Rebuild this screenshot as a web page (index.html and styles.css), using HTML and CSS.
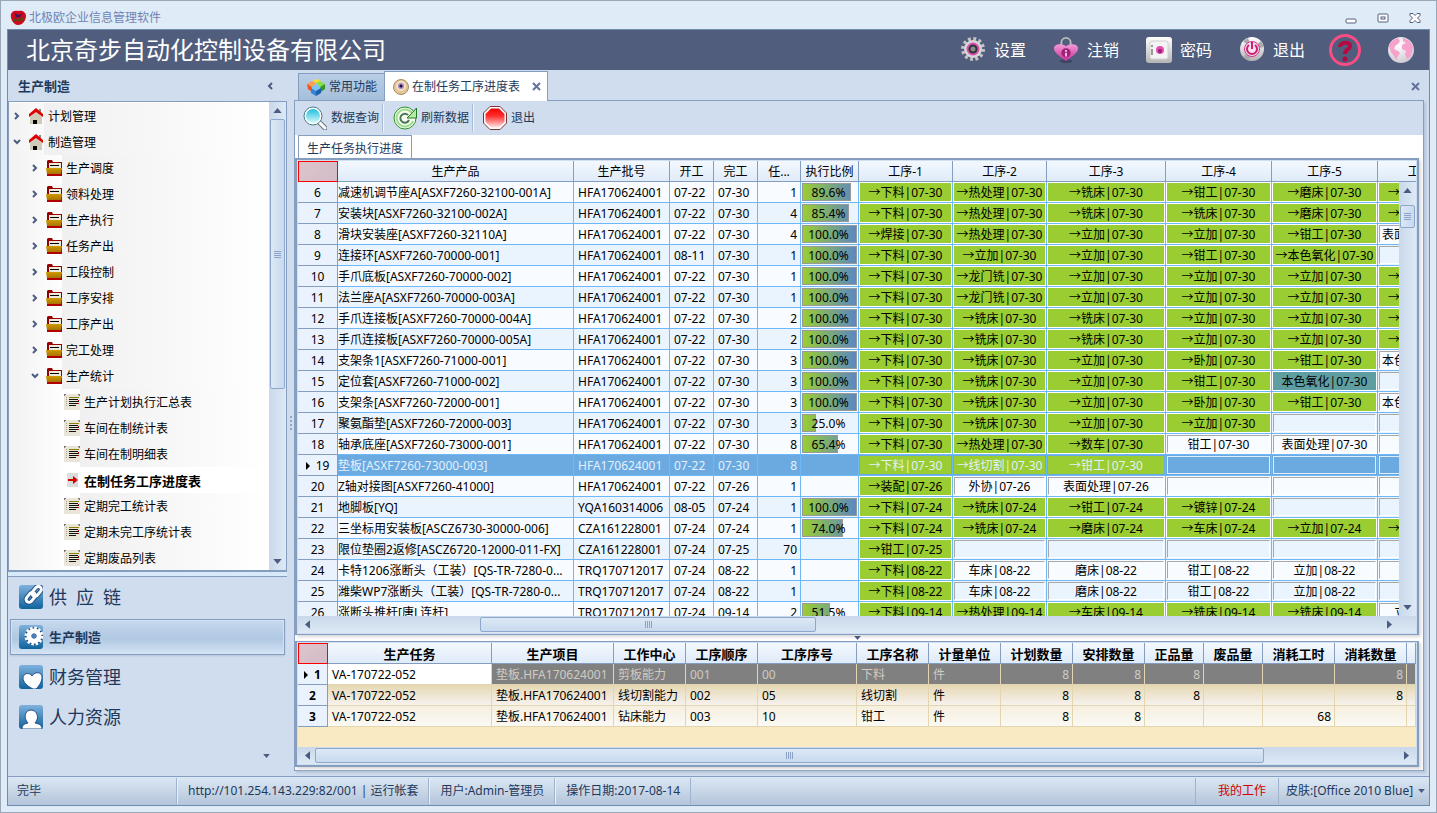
FILE: index.html
```
<!DOCTYPE html>
<html lang="zh-CN">
<head>
    <meta charset="UTF-8">
    <meta name="viewport" content="width=device-width, initial-scale=1.0">
    <title>北极欧企业信息管理软件</title>
    <link rel="stylesheet" href="styles.css">
</head>
<body>
    <!-- Иконки -->
    <svg class="sprite" aria-hidden="true">
        <defs>
            <linearGradient id="g-blue" x1="0" y1="0" x2="0" y2="1"><stop offset="0" stop-color="#7fb2dd"/><stop offset="1" stop-color="#10639d"/></linearGradient>
            <linearGradient id="g-pink" x1="0" y1="0" x2="0" y2="1"><stop offset="0" stop-color="#f29ad6"/><stop offset="1" stop-color="#c8309a"/></linearGradient>
            <linearGradient id="g-metal" x1="0" y1="0" x2="0" y2="1"><stop offset="0" stop-color="#ffffff"/><stop offset="1" stop-color="#b4b4b4"/></linearGradient>
            <linearGradient id="g-glass" x1="0" y1="0" x2="0" y2="1"><stop offset="0" stop-color="#1fc0dc"/><stop offset="1" stop-color="#d8f8fc"/></linearGradient>
            <linearGradient id="g-stop" x1="0" y1="0" x2="0" y2="1"><stop offset="0" stop-color="#f60000"/><stop offset="0.4" stop-color="#ff3030"/><stop offset="1" stop-color="#ffe4e4"/></linearGradient>
            <linearGradient id="g-folder" x1="0" y1="0" x2="0" y2="1"><stop offset="0" stop-color="#d09a00"/><stop offset="1" stop-color="#a87400"/></linearGradient>
            <radialGradient id="g-globe" cx="0.4" cy="0.3" r="0.8"><stop offset="0" stop-color="#ffffff"/><stop offset="1" stop-color="#c9c4cf"/></radialGradient>
        </defs>
        <symbol id="i-house" viewBox="0 0 16 16">
            <path d="M8 3l6 5v8H2V8z" fill="#cfcbb8"/>
            <path d="M11 1h2v5h-2z" fill="#8c8c84"/>
            <path d="M8 0l7 6v3L8 4 1 9V6z" fill="#e00000"/>
            <rect x="5" y="12" width="4" height="4" fill="#000"/>
        </symbol>
        <symbol id="i-folder" viewBox="0 0 16 16">
            <path d="M1 1l1-1h4l1 2h9v14H1z" fill="#9a0000"/>
            <path d="M3 3h12v5H3z" fill="#eeeadb"/>
            <path d="M4 5.500h9" stroke="#000"/>
            <path d="M0 8h16l-1 6H1z" fill="url(#g-folder)"/>
            <path d="M1 14h15v2H1z" fill="#b00000"/>
        </symbol>
        <symbol id="i-list" viewBox="0 0 16 16">
            <rect width="16" height="16" fill="#e9e6d9"/>
            <path d="M0 0h2v1H1v1H0zM14 0h2v2h-1z" fill="#77756b"/>
            <path d="M5 3.500h10" stroke="#8a8000"/>
            <path d="M5 5.500h9M5 7.500h10M5 9.500h9M5 11.500h7" stroke="#111"/>
            <path d="M2.500 3v10" stroke="#aaa696" stroke-dasharray="1 1"/>
            <path d="M14 6h1v1h-1zM14 9h1v1h-1z" fill="#c00"/>
        </symbol>
        <symbol id="i-go" viewBox="0 0 16 16">
            <rect x="3" y="1" width="11" height="14" rx="1" fill="#dcdcdc"/>
            <path d="M4 7h5V4l5 4-5 4V9H4z" fill="#d40000"/>
        </symbol>
        <symbol id="i-right" viewBox="0 0 10 10"><path d="M3 2l3 3-3 3" fill="none" stroke="#4c5c80" stroke-width="2"/></symbol>
        <symbol id="i-down" viewBox="0 0 10 10"><path d="M2 3l3 3 3-3" fill="none" stroke="#4c5c80" stroke-width="2"/></symbol>
        <symbol id="i-left" viewBox="0 0 10 10"><path d="M6 2L3 5l3 3" fill="none" stroke="#4c5c80" stroke-width="2"/></symbol>
        <symbol id="i-x" viewBox="0 0 10 10"><path d="M1 1l7 7M8 1L1 8" fill="none" stroke="#63739a" stroke-width="2"/></symbol>
        <symbol id="i-tri" viewBox="0 0 10 6"><path d="M0 0h10L5 6z" fill="#4a5a80"/></symbol>
        <symbol id="i-berry" viewBox="0 0 16 16">
            <path d="M1 4c1-3 4-4 7-3 4-1 8 1 8 5s-3 9-8 9-8-7-7-11z" fill="#cf0a1c"/>
            <path d="M4 3l5 2 5-2-4 3 1 2-3-1-3 1 1-2z" fill="#3b1560"/>
            <circle cx="5" cy="10" r="1.500" fill="#3a5a10"/><circle cx="9" cy="10" r="1.500" fill="#3a5a10"/><circle cx="12" cy="9" r="1.500" fill="#3a5a10"/>
        </symbol>
        <symbol id="i-gear" viewBox="0 0 26 26">
            <circle cx="13" cy="12" r="10" fill="none" stroke="#c4c4c4" stroke-width="4" stroke-dasharray="2.800 2.436"/>
            <circle cx="13" cy="12" r="9" fill="#d6d6d6"/>
            <circle cx="13" cy="12" r="5.500" fill="#777" stroke="#e04cb8" stroke-width="2"/>
            <circle cx="13" cy="12" r="3.500" fill="#8a8a8a" stroke="#333" stroke-width="2"/>
        </symbol>
        <symbol id="i-lock" viewBox="0 0 26 28">
            <path d="M8 11V6a5 5 0 0 1 10 0v5" fill="none" stroke="#b9bcbc" stroke-width="2"/>
            <ellipse cx="13" cy="26" rx="7" ry="2" fill="#3d4763"/>
            <path d="M13 26C9 22 0 18 0 12c0-4 8-6 13-2 5-4 13-2 13 2 0 6-9 10-13 14z" fill="url(#g-pink)"/>
            <circle cx="13" cy="17" r="5" fill="#a0207a"/>
            <path d="M12 14h2v2h-2zM12 17h2v4h-2z" fill="#f5c4e6"/>
        </symbol>
        <symbol id="i-safe" viewBox="0 0 26 26">
            <rect width="26" height="26" rx="3" fill="url(#g-metal)"/>
            <rect x="4" y="4" width="18" height="18" rx="2" fill="#f4f4f4" stroke="#d0d0d0"/>
            <path d="M6 8v2M6 12v6" stroke="#999" stroke-width="2"/>
            <circle cx="14" cy="13" r="4" fill="#e04cb0"/><circle cx="14" cy="14" r="2" fill="#9a1c78"/>
        </symbol>
        <symbol id="i-power" viewBox="0 0 26 26">
            <circle cx="13" cy="12" r="12" fill="url(#g-metal)"/>
            <path d="M13 12L4 4l5-3zM13 12l9-8 3 6zM13 12l-9 8 6 4z" fill="#a9a9ad"/>
            <circle cx="13" cy="12" r="7.500" fill="#f3e3ed" stroke="#d4338c"/>
            <path d="M10 8a5 5 0 1 0 6 0M13 5v7" fill="none" stroke="#cf1f74" stroke-width="2"/>
        </symbol>
        <symbol id="i-help" viewBox="0 0 32 32">
            <circle cx="16" cy="16" r="14.500" fill="none" stroke="#fb4d85" stroke-width="3"/>
            <path d="M11 13c0-5 10-6 10-1 0 4-5 3-5 8" fill="none" stroke="#b50a41" stroke-width="4"/>
            <circle cx="16" cy="25" r="2.500" fill="#b50a41"/>
        </symbol>
        <symbol id="i-globe" viewBox="0 0 26 26">
            <circle cx="13" cy="13" r="13" fill="url(#g-globe)"/>
            <path d="M1 9c1-4 5-7 9-8l2 3-2 3-3 2-1 3 4 2 2 2-2 3-2 4-2-4-3-4zM15 1c5 1 8 4 10 9l-1 5-2 5-3 2-2-5 1-3-4-2 0-4 4-2-3-2z" fill="#f6a2cc"/>
        </symbol>
        <symbol id="i-cubes" viewBox="0 0 20 17">
            <path d="M7 2l4-2 4 2-4 2z" fill="#ffe01a"/>
            <path d="M1 5l5-3 4 2-4 4z" fill="#ff9c4d"/><path d="M1 5l5 3v5l-4-3z" fill="#e8561a"/>
            <path d="M10 4l4-2 5 3-5 3z" fill="#8be04a"/><path d="M14 8l5-3v5l-4 3z" fill="#2f9a1e"/>
            <path d="M5 9l5-4 5 4-5 3z" fill="#7cc4f6"/><path d="M5 9l5 3v5l-5-3z" fill="#2f86d8"/><path d="M10 12l5-3v5l-5 3z" fill="#1b5fae"/>
        </symbol>
        <symbol id="i-eye" viewBox="0 0 16 16">
            <circle cx="8" cy="8" r="7.500" fill="#e3c69a" stroke="#a98a5c"/>
            <circle cx="8" cy="7" r="5" fill="#f1dfc4"/><circle cx="8" cy="7" r="3" fill="#a488c0"/><circle cx="8" cy="7" r="1.500" fill="#2a0a3c"/>
        </symbol>
        <symbol id="i-find" viewBox="0 0 24 24">
            <path d="M16 16l6 6" stroke="#6d7478" stroke-width="5" stroke-linecap="round"/>
            <path d="M16 16l6 6" stroke="#fff" stroke-width="3" stroke-linecap="round"/>
            <circle cx="10" cy="10" r="9" fill="#fff" stroke="#4a7c88"/>
            <circle cx="10" cy="10" r="7" fill="url(#g-glass)"/>
        </symbol>
        <symbol id="i-reload" viewBox="0 0 24 24">
            <circle cx="12" cy="12" r="11" fill="#f4fff0" stroke="#2f8f2f"/>
            <path d="M19 7a8.500 8.500 0 1 0 1 8" fill="none" stroke="#9fdc8f" stroke-width="2"/>
            <path d="M15 9a4.500 4.500 0 1 0 1 5" fill="none" stroke="#4d7455" stroke-width="2"/>
            <path d="M23.500 2v10H14l4-4z" fill="#b5eba5" stroke="#207a20"/>
        </symbol>
        <symbol id="i-stop" viewBox="0 0 24 24">
            <path d="M7 .5h10l6.500 6.500v10L17 23.500H7L.5 17V7z" fill="#fff" stroke="#7a3434"/>
            <path d="M8 2.500h8l5.500 5.500v8L16 21.500H8L2.500 16V8z" fill="url(#g-stop)"/>
        </symbol>
        <symbol id="i-chain" viewBox="0 0 24 24">
            <rect width="24" height="24" rx="3" fill="url(#g-blue)"/>
            <g fill="none" stroke="#24508a" stroke-width="5"><rect x="6" y="9" width="11" height="6" rx="3" transform="rotate(-50 12 12)"/><rect x="12" y="3" width="11" height="6" rx="3" transform="rotate(-50 18 6)"/></g>
            <g fill="none" stroke="#fff" stroke-width="3"><rect x="6" y="9" width="11" height="6" rx="3" transform="rotate(-50 12 12)"/><rect x="12" y="3" width="11" height="6" rx="3" transform="rotate(-50 18 6)"/></g>
        </symbol>
        <symbol id="i-cog" viewBox="0 0 24 24">
            <rect width="24" height="24" rx="3" fill="url(#g-blue)"/>
            <circle cx="15" cy="11" r="9" fill="#24508a"/>
            <circle cx="15" cy="11" r="8" fill="none" stroke="#fff" stroke-width="3" stroke-dasharray="2.500 1.688"/>
            <circle cx="15" cy="11" r="5" fill="none" stroke="#fff" stroke-width="5"/>
            <circle cx="15" cy="11" r="2.500" fill="#4a80b8"/>
        </symbol>
        <symbol id="i-heart" viewBox="0 0 24 24">
            <rect width="24" height="24" rx="3" fill="url(#g-blue)"/>
            <path d="M14 24C8 21 4 17 4 13c0-5 7-6 9-2 3-5 10-4 10 1 0 4-2 8-6 12z" fill="#fff" stroke="#24508a"/>
        </symbol>
        <symbol id="i-user" viewBox="0 0 24 24">
            <rect width="24" height="24" rx="3" fill="url(#g-blue)"/>
            <path d="M3 24c0-5 3-5 6-6-5-5-3-13 3-13s9 8 4 13c3 1 7 1 7 6z" fill="#fff" stroke="#24508a"/>
        </symbol>
    </svg>

    <div class="window">
        <!-- Заголовок окна -->
        <div class="titlebar">
            <svg class="ico-16"><use href="#i-berry"/></svg>
            <span class="titlebar-text">北极欧企业信息管理软件</span>
            <div class="win-btns">
                <button type="button" aria-label="最小化"><svg width="12" height="12"><rect x="1" y="7" width="10" height="4" rx="1" fill="#fff" stroke="#55607a"/></svg></button>
                <button type="button" aria-label="最大化"><svg width="12" height="12"><rect x="1" y="2" width="10" height="8" rx="1" fill="#fff" stroke="#55607a"/><rect x="4" y="5" width="4" height="2" fill="#fff" stroke="#55607a"/></svg></button>
                <button type="button" aria-label="关闭"><svg width="12" height="12"><path d="M1 1.500h3l2 2 2-2h3v2L8.500 6 11 8.500v2H8l-2-2-2 2H1v-2L3.500 6 1 3.500z" fill="#fff" stroke="#55607a"/></svg></button>
            </div>
        </div>

        <div class="frame">
            <!-- Шапка -->
            <header class="header">
                <h1>北京奇步自动化控制设备有限公司</h1>
                <nav class="header-nav">
                    <a href="#"><svg class="ico-26"><use href="#i-gear"/></svg>设置</a>
                    <a href="#"><svg class="ico-26"><use href="#i-lock"/></svg>注销</a>
                    <a href="#"><svg class="ico-26"><use href="#i-safe"/></svg>密码</a>
                    <a href="#"><svg class="ico-26"><use href="#i-power"/></svg>退出</a>
                    <a href="#" class="help" aria-label="帮助"><svg class="ico-32"><use href="#i-help"/></svg></a>
                    <a href="#" aria-label="网站"><svg class="ico-26"><use href="#i-globe"/></svg></a>
                </nav>
            </header>

            <div class="work">
                <!-- Левая панель -->
                <aside class="side">
                    <div class="side-head">生产制造<button type="button" aria-label="收起"><svg class="ico-10"><use href="#i-left"/></svg></button></div>
                    <div class="tree-box">
                        <ul class="tree" id="tree"></ul>
                        <div class="vscroll">
                            <svg class="tri tri-up"><use href="#i-tri"/></svg>
                            <div class="thumb tree-thumb"><i class="grip"></i></div>
                            <svg class="tri"><use href="#i-tri"/></svg>
                        </div>
                    </div>
                    <div class="side-split"></div>
                    <nav class="modules">
                        <a href="#"><svg class="ico-24"><use href="#i-chain"/></svg>供&ensp;应&ensp;链</a>
                        <a href="#" class="active"><svg class="ico-24"><use href="#i-cog"/></svg>生产制造</a>
                        <a href="#"><svg class="ico-24"><use href="#i-heart"/></svg>财务管理</a>
                        <a href="#"><svg class="ico-24"><use href="#i-user"/></svg>人力资源</a>
                    </nav>
                    <div class="side-foot"><svg class="tri-small"><use href="#i-tri"/></svg></div>
                </aside>
                <div class="col-split"><i></i><i></i><i></i><i></i></div>

                <!-- Рабочая область -->
                <main class="main">
                    <div class="tabs">
                        <button type="button" class="tab"><svg class="ico-tab"><use href="#i-cubes"/></svg>常用功能</button>
                        <button type="button" class="tab current"><svg class="ico-16"><use href="#i-eye"/></svg>在制任务工序进度表<svg class="ico-10 tab-x"><use href="#i-x"/></svg></button>
                        <button type="button" class="close-all" aria-label="关闭"><svg class="ico-10"><use href="#i-x"/></svg></button>
                    </div>
                    <div class="page">
                        <div class="toolbar">
                            <button type="button"><svg class="ico-24"><use href="#i-find"/></svg>数据查询</button>
                            <button type="button"><svg class="ico-24"><use href="#i-reload"/></svg>刷新数据</button>
                            <button type="button"><svg class="ico-24"><use href="#i-stop"/></svg>退出</button>
                        </div>
                        <div class="subtabs"><button type="button">生产任务执行进度</button></div>

                        <!-- Верхняя таблица -->
                        <section class="grid grid-top">
                            <div class="grid-view">
                                <table class="tasks">
                                    <colgroup>
                                        <col class="w40"><col class="w236"><col class="w96"><col class="w44"><col class="w44"><col class="w43"><col class="w58"><col class="w94"><col class="w94"><col class="w119"><col class="w106"><col class="w106"><col>
                                    </colgroup>
                                    <thead>
                                        <tr><th class="corner"></th><th>生产产品</th><th>生产批号</th><th>开工</th><th>完工</th><th>任...</th><th>执行比例</th><th>工序-1</th><th>工序-2</th><th>工序-3</th><th>工序-4</th><th>工序-5</th><th>工序-6</th></tr>
                                    </thead>
                                    <tbody id="tasks"></tbody>
                                </table>
                                <div class="vscroll over">
                                    <svg class="tri tri-up"><use href="#i-tri"/></svg>
                                    <div class="thumb task-thumb"><i class="grip"></i></div>
                                    <svg class="tri"><use href="#i-tri"/></svg>
                                </div>
                            </div>
                            <div class="hscroll short">
                                <svg class="tri tri-left"><use href="#i-tri"/></svg>
                                <div class="track"><div class="thumb h-thumb-1"><i class="grip side-grip"></i></div></div>
                                <svg class="tri tri-right"><use href="#i-tri"/></svg>
                            </div>
                        </section>
                        <div class="row-split"><svg class="tri-small"><use href="#i-tri"/></svg></div>

                        <!-- Нижняя таблица -->
                        <section class="grid grid-bottom">
                            <div class="grid-view">
                                <table class="details">
                                    <colgroup>
                                        <col class="w30"><col class="w164"><col class="w122"><col class="w72"><col class="w72"><col class="w99"><col class="w72"><col class="w72"><col class="w72"><col class="w72"><col class="w59"><col class="w59"><col class="w72"><col class="w72"><col>
                                    </colgroup>
                                    <thead>
                                        <tr><th class="corner"></th><th>生产任务</th><th>生产项目</th><th>工作中心</th><th>工序顺序</th><th>工序序号</th><th>工序名称</th><th>计量单位</th><th>计划数量</th><th>安排数量</th><th>正品量</th><th>废品量</th><th>消耗工时</th><th>消耗数量</th><th></th></tr>
                                    </thead>
                                    <tbody>
                                        <tr class="sel"><th><i class="mark"></i>1</th><td class="focus">VA-170722-052</td><td>垫板.HFA170624001</td><td>剪板能力</td><td>001</td><td>00</td><td>下料</td><td>件</td><td class="num">8</td><td class="num">8</td><td class="num">8</td><td></td><td></td><td class="num">8</td><td></td></tr>
                                        <tr class="odd"><th>2</th><td>VA-170722-052</td><td>垫板.HFA170624001</td><td>线切割能力</td><td>002</td><td>05</td><td>线切割</td><td>件</td><td class="num">8</td><td class="num">8</td><td class="num">8</td><td></td><td></td><td class="num">8</td><td></td></tr>
                                        <tr class="even"><th>3</th><td>VA-170722-052</td><td>垫板.HFA170624001</td><td>钻床能力</td><td>003</td><td>10</td><td>钳工</td><td>件</td><td class="num">8</td><td class="num">8</td><td></td><td></td><td class="num">68</td><td></td><td></td></tr>
                                    </tbody>
                                </table>
                            </div>
                            <div class="hscroll">
                                <svg class="tri tri-left"><use href="#i-tri"/></svg>
                                <div class="track"><div class="thumb h-thumb-2"><i class="grip side-grip"></i></div></div>
                                <svg class="tri tri-right"><use href="#i-tri"/></svg>
                            </div>
                        </section>
                    </div>
                </main>
            </div>

            <!-- Строка состояния -->
            <footer class="status">
                <span class="st-ready">完毕</span>
                <span class="st-cell">http://101.254.143.229:82/001 | 运行帐套</span>
                <span class="st-cell">用户:Admin-管理员</span>
                <span class="st-cell st-date">操作日期:2017-08-14</span>
                <a href="#" class="st-work">我的工作</a>
                <span class="st-skin"><select aria-label="皮肤"><option>皮肤:[Office 2010 Blue]</option></select><svg class="tri-small"><use href="#i-tri"/></svg></span>
            </footer>
        </div>
    </div>

    <script>
        // Дерево меню: [уровень, иконка, текст, стрелка]
        const menu = [
            [0, 'house', '计划管理', 'right'],
            [0, 'house', '制造管理', 'down'],
            [1, 'folder', '生产调度', 'right'],
            [1, 'folder', '领料处理', 'right'],
            [1, 'folder', '生产执行', 'right'],
            [1, 'folder', '任务产出', 'right'],
            [1, 'folder', '工段控制', 'right'],
            [1, 'folder', '工序安排', 'right'],
            [1, 'folder', '工序产出', 'right'],
            [1, 'folder', '完工处理', 'right'],
            [1, 'folder', '生产统计', 'down'],
            [2, 'list', '生产计划执行汇总表', ''],
            [2, 'list', '车间在制统计表', ''],
            [2, 'list', '车间在制明细表', ''],
            [2, 'go', '在制任务工序进度表', ''],
            [2, 'list', '定期完工统计表', ''],
            [2, 'list', '定期未完工序统计表', ''],
            [2, 'list', '定期废品列表', '']
        ];

        document.getElementById('tree').innerHTML = menu.map(([level, icon, text, arrow]) =>
            `<li class="level-${level}${icon === 'go' ? ' chosen' : ''}">` +
            `<svg class="ico-10">${arrow ? `<use href="#i-${arrow}"/>` : ''}</svg>` +
            `<svg class="ico-16"><use href="#i-${icon}"/></svg><a href="#">${text}</a></li>`
        ).join('');

        // Задания: номер, изделие, партия, начало, конец, кол-во, процент, операции
        const A = 'HFA170624001';
        const tasks = [
            [6, '减速机调节座A[ASXF7260-32100-001A]', A, '07-22', '07-30', 1, 89.6, '→下料|07-30', '→热处理|07-30', '→铣床|07-30', '→钳工|07-30', '→磨床|07-30', '→立加|07-30'],
            [7, '安装块[ASXF7260-32100-002A]', A, '07-22', '07-30', 4, 85.4, '→下料|07-30', '→热处理|07-30', '→铣床|07-30', '→铣床|07-30', '→磨床|07-30', '→立加|07-30'],
            [8, '滑块安装座[ASXF7260-32110A]', A, '07-22', '07-30', 4, 100, '→焊接|07-30', '→热处理|07-30', '→立加|07-30', '→立加|07-30', '→钳工|07-30', '表面处理|07-30'],
            [9, '连接环[ASXF7260-70000-001]', A, '08-11', '07-30', 1, 100, '→下料|07-30', '→立加|07-30', '→立加|07-30', '→钳工|07-30', '→本色氧化|07-30', ''],
            [10, '手爪底板[ASXF7260-70000-002]', A, '07-22', '07-30', 1, 100, '→下料|07-30', '→龙门铣|07-30', '→立加|07-30', '→立加|07-30', '→立加|07-30', '→钳工|07-30'],
            [11, '法兰座A[ASXF7260-70000-003A]', A, '07-22', '07-30', 1, 100, '→下料|07-30', '→龙门铣|07-30', '→立加|07-30', '→立加|07-30', '→立加|07-30', '→钳工|07-30'],
            [12, '手爪连接板[ASXF7260-70000-004A]', A, '07-22', '07-30', 2, 100, '→下料|07-30', '→铣床|07-30', '→铣床|07-30', '→立加|07-30', '→立加|07-30', '→钳工|07-30'],
            [13, '手爪连接板[ASXF7260-70000-005A]', A, '07-22', '07-30', 2, 100, '→下料|07-30', '→铣床|07-30', '→铣床|07-30', '→立加|07-30', '→立加|07-30', '→钳工|07-30'],
            [14, '支架条1[ASXF7260-71000-001]', A, '07-22', '07-30', 3, 100, '→下料|07-30', '→铣床|07-30', '→立加|07-30', '→卧加|07-30', '→钳工|07-30', '本色氧化|07-30'],
            [15, '定位套[ASXF7260-71000-002]', A, '07-22', '07-30', 3, 100, '→下料|07-30', '→铣床|07-30', '→立加|07-30', '→钳工|07-30', '*本色氧化|07-30', ''],
            [16, '支架条[ASXF7260-72000-001]', A, '07-22', '07-30', 3, 100, '→下料|07-30', '→铣床|07-30', '→立加|07-30', '→卧加|07-30', '→钳工|07-30', '本色氧化|07-30'],
            [17, '聚氨酯垫[ASXF7260-72000-003]', A, '07-22', '07-30', 3, 25, '→下料|07-30', '→铣床|07-30', '→立加|07-30', '→立加|07-30', '', ''],
            [18, '轴承底座[ASXF7260-73000-001]', A, '07-22', '07-30', 8, 65.4, '→下料|07-30', '→热处理|07-30', '→数车|07-30', '钳工|07-30', '表面处理|07-30', ''],
            [19, '垫板[ASXF7260-73000-003]', A, '07-22', '07-30', 8, 0, '→下料|07-30', '→线切割|07-30', '→钳工|07-30', '', '', ''],
            [20, 'Z轴对接图[ASXF7260-41000]', A, '07-22', '07-26', 1, 0, '→装配|07-26', '外协|07-26', '表面处理|07-26', '', '', ''],
            [21, '地脚板[YQ]', 'YQA160314006', '08-05', '07-24', 1, 100, '→下料|07-24', '→铣床|07-24', '→钳工|07-24', '→镀锌|07-24', '', ''],
            [22, '三坐标用安装板[ASCZ6730-30000-006]', 'CZA161228001', '07-24', '07-24', 1, 74, '→下料|07-24', '→铣床|07-24', '→磨床|07-24', '→车床|07-24', '→立加|07-24', '→钳工|07-24'],
            [23, '限位垫圈2返修[ASCZ6720-12000-011-FX]', 'CZA161228001', '07-24', '07-25', 70, 0, '→钳工|07-25', '', '', '', '', ''],
            [24, '卡特1206涨断头（工装）[QS-TR-7280-0...', 'TRQ170712017', '07-24', '08-22', 1, 0, '→下料|08-22', '车床|08-22', '磨床|08-22', '钳工|08-22', '立加|08-22', ''],
            [25, '潍柴WP7涨断头（工装）[QS-TR-7280-0...', 'TRQ170712017', '07-24', '08-22', 1, 0, '→下料|08-22', '车床|08-22', '磨床|08-22', '钳工|08-22', '立加|08-22', ''],
            [26, '涨断头推杆[唐L连杆]', 'TRQ170712017', '07-24', '09-14', 2, 51.5, '→下料|09-14', '→热处理|09-14', '→车床|09-14', '→铣床|09-14', '→铣床|09-14', '立加|09-14']
        ];
        const current = 19;

        // Ячейка процента выполнения
        function percentCell(p) {
            if (!p) return '<td></td>';
            return `<td class="pct"><div class="bar" style="width:${p}%"></div><span>${p.toFixed(1)}%</span></td>`;
        }

        // Ячейка операции
        function stepCell(s) {
            const state = s[0] === '→' ? ' done' : s[0] === '*' ? ' active' : '';
            return `<td class="step"><div class="chip${state}">${s.replace('*', '')}</div></td>`;
        }

        document.getElementById('tasks').innerHTML = tasks.map(([no, name, lot, from, to, qty, p, ...steps]) =>
            `<tr${no === current ? ' class="sel"' : ''}><th>${no === current ? '<i class="mark"></i>' : ''}${no}</th>` +
            `<td class="name">${name}</td><td>${lot}</td><td>${from}</td><td>${to}</td><td class="num">${qty}</td>` +
            percentCell(p) + steps.map(stepCell).join('') + '</tr>'
        ).join('');
    </script>
</body>
</html>
```
FILE: styles.css
```
/* Основные стили */
* {
    box-sizing: border-box;
}

body {
    margin: 0;
    font-family: "Noto Sans", "Noto Sans CJK SC", sans-serif;
    font-size: 12px;
    line-height: 20px;
    color: #000;
}

button, select {
    font: inherit;
    color: inherit;
    background: none;
    border: none;
    padding: 0;
    margin: 0;
}

a {
    color: inherit;
    text-decoration: none;
}

svg {
    display: block;
    flex: none;
}

.sprite {
    position: absolute;
    width: 0;
    height: 0;
}

.ico-10 { width: 10px; height: 10px; }
.ico-16 { width: 16px; height: 16px; }
.ico-tab { width: 20px; height: 17px; }
.ico-24 { width: 24px; height: 24px; }
.ico-26 { width: 26px; height: 26px; }
.ico-32 { width: 32px; height: 32px; }
.tri { width: 9px; height: 5px; margin: 6px 0; }
.tri-up { transform: rotate(180deg); }
.tri-left { transform: rotate(90deg); }
.tri-right { transform: rotate(-90deg); }
.tri-small { width: 7px; height: 4px; }

/* Окно */
.window {
    display: flex;
    flex-direction: column;
    height: 100vh;
    min-height: 600px;
    padding: 0 6px 6px;
    border: 1px solid #99a8b8;
    background: #dfebf7;
}

.titlebar {
    display: flex;
    align-items: center;
    height: 28px;
    padding: 5px 9px 0 3px;
    gap: 3px;
    color: #7085b3;
}

.titlebar-text {
    flex: 1;
}

.win-btns {
    display: flex;
    gap: 20px;
}

.frame {
    flex: 1;
    min-height: 0;
    display: flex;
    flex-direction: column;
    border: 1px solid #6f8bb0;
    background: #d0ddee;
}

/* Шапка */
.header {
    display: flex;
    align-items: center;
    justify-content: space-between;
    height: 40px;
    flex: none;
    padding: 0 15px 0 18px;
    background: #515d7d;
    color: #fff;
}

.header h1 {
    margin: 0;
    font-size: 24px;
    font-weight: normal;
    line-height: 40px;
}

.header-nav {
    display: flex;
    align-items: center;
    gap: 27px;
    font-size: 16px;
}

.header-nav a {
    display: flex;
    align-items: center;
    gap: 8px;
}

.header-nav .help {
    margin-left: -3px;
}

.work {
    flex: 1;
    min-height: 0;
    display: flex;
}

/* Левая панель */
.side {
    display: flex;
    flex-direction: column;
    width: 279px;
    color: #1e395b;
}

.side-head {
    display: flex;
    align-items: center;
    justify-content: space-between;
    height: 31px;
    padding: 0 11px 0 10px;
    font-size: 13px;
    font-weight: bold;
}

.tree-box {
    flex: 1;
    min-height: 0;
    display: flex;
    border: 1px solid #859ebf;
    border-bottom-width: 2px;
    background: #fff;
}

.tree {
    flex: 1;
    margin: 0;
    padding: 1px 0 0;
    list-style: none;
    overflow: hidden;
    color: #000;
}

.tree li {
    display: flex;
    align-items: center;
    height: 26px;
    padding-left: 3px;
    background: linear-gradient(90deg, #f2f2f2, #fff 60px);
}

.tree .ico-16 {
    margin-left: 6px;
}

.tree .level-1 { padding-left: 21px; }
.tree .level-2 { padding-left: 39px; }

.tree a {
    flex: 1;
    padding: 2px 0 0 4px;
    line-height: 24px;
    background: linear-gradient(90deg, #f0f0f0, #fff);
}

.tree .chosen a {
    background: #fff;
    font-size: 13px;
    font-weight: bold;
}

.side-split {
    height: 5px;
    border-bottom: 1px solid #859ebf;
    background: #d8e9fa;
}

.modules a {
    display: flex;
    align-items: center;
    gap: 6px;
    height: 36px;
    margin: 4px 2px;
    padding-left: 8px;
    border: 1px solid transparent;
    font-size: 18px;
}

.modules a:first-child {
    margin-top: 2px;
}

.modules .active {
    border-color: #859ebf;
    box-shadow: inset 0 0 0 1px #d5e4f4, 0 1px 2px #b3c3d8;
    background: linear-gradient(#c7d9ed, #b0c8e2 55%, #d3e4f5);
    font-size: 13px;
    font-weight: bold;
}

.side-foot {
    display: flex;
    justify-content: flex-end;
    height: 37px;
    padding: 15px 17px 0 0;
}

.col-split {
    display: flex;
    flex-direction: column;
    justify-content: center;
    align-items: center;
    gap: 2px;
    width: 7px;
}

.col-split i {
    width: 2px;
    height: 2px;
    background: #8fa7c8;
}

/* Полосы прокрутки */
.vscroll {
    display: flex;
    flex-direction: column;
    align-items: center;
    width: 17px;
    background: linear-gradient(90deg, #c9d8ea, #dde9f5);
}

.vscroll .tri:last-child {
    margin-top: auto;
}

.thumb {
    display: flex;
    align-items: center;
    justify-content: center;
    border: 1px solid #8ea8cd;
    border-radius: 2px;
    background: linear-gradient(90deg, #dce8f5, #c8daee);
}

.tree-thumb { width: 15px; height: 270px; }
.task-thumb { width: 15px; height: 23px; margin-top: 6px; }

.grip {
    width: 7px;
    height: 7px;
    background: repeating-linear-gradient(#8aa3c7 0 1px, transparent 1px 2px);
}

.side-grip {
    background: repeating-linear-gradient(90deg, #8aa3c7 0 1px, transparent 1px 2px);
}

.hscroll {
    display: flex;
    align-items: center;
    height: 17px;
    flex: none;
    padding: 0 5px;
    background: linear-gradient(#c9d8ea, #dde9f5);
}

.hscroll.short {
    padding-right: 22px;
}

.track {
    flex: 1;
    padding: 0 3px;
}

.hscroll .thumb {
    height: 15px;
    background: linear-gradient(#dce8f5, #c8daee);
}

.h-thumb-1 { width: 31.5%; margin-left: 15.5%; }
.h-thumb-2 { width: 87.5%; }

/* Вкладки */
.main {
    flex: 1;
    min-width: 0;
    display: flex;
    flex-direction: column;
    padding: 0 5px 5px 0;
    color: #1e395b;
}

.tabs {
    display: flex;
    align-items: flex-end;
    height: 31px;
    margin-bottom: -1px;
    padding-left: 4px;
}

.tab {
    display: flex;
    align-items: center;
    gap: 3px;
    height: 28px;
    padding: 0 7px;
    border: 1px solid #859ebf;
    border-right: none;
    background: linear-gradient(#b9cee6, #a5bfdc);
}

.tab.current {
    position: relative;
    height: 30px;
    padding: 0 5px 0 8px;
    border-right: 1px solid #859ebf;
    border-bottom: none;
    background: #fff;
}

.tab-x {
    margin-left: 9px;
}

.close-all {
    margin: 0 3px 9px auto;
}

.page {
    flex: 1;
    min-height: 0;
    display: flex;
    flex-direction: column;
    padding: 0 4px 3px 0;
    border: 1px solid #859ebf;
    background: #fff;
    box-shadow: 2px 2px 2px #b5c5da;
}

.toolbar {
    display: flex;
    align-items: center;
    height: 34px;
    flex: none;
    margin-right: -4px;
    padding-left: 8px;
    gap: 10px;
    background: #d0ddee;
}

.toolbar button {
    display: flex;
    align-items: center;
    gap: 4px;
    height: 28px;
    padding-right: 3px;
    border-right: 1px solid #a9bdd8;
    box-shadow: 1px 0 0 #eef4fb;
}

.toolbar button:last-child {
    border-right: none;
    box-shadow: none;
}

.subtabs {
    display: flex;
    height: 23px;
    flex: none;
    padding-left: 3px;
}

.subtabs button {
    padding: 3px 8px 0;
    border: 1px solid #859ebf;
    border-bottom: none;
}

/* Таблицы */
.grid {
    display: flex;
    flex-direction: column;
    padding: 1px;
    border: 2px solid #859ebf;
    background: #cfdef0;
    box-shadow: 2px 2px 3px #d8d8d8;
    color: #000;
}

.grid-top {
    flex: 1;
    min-height: 0;
    border-bottom-width: 1px;
}

.grid-bottom {
    height: 126px;
    flex: none;
    border-top-width: 1px;
}

.grid-view {
    position: relative;
    flex: 1;
    min-height: 0;
    overflow: hidden;
}

.over {
    position: absolute;
    top: 21px;
    right: 0;
    bottom: 0;
}

.grid table {
    width: 100%;
    table-layout: fixed;
    border-collapse: separate;
    border-spacing: 0;
}

.grid .tasks { min-width: 1175px; }

.w30 { width: 30px; }
.w40 { width: 40px; }
.w43 { width: 43px; }
.w44 { width: 44px; }
.w58 { width: 58px; }
.w59 { width: 59px; }
.w72 { width: 72px; }
.w94 { width: 94px; }
.w96 { width: 96px; }
.w99 { width: 99px; }
.w106 { width: 106px; }
.w119 { width: 119px; }
.w122 { width: 122px; }
.w164 { width: 164px; }
.w236 { width: 236px; }

.grid th, .grid td {
    height: 21px;
    padding: 2px 0 0;
    line-height: 18px;
    white-space: nowrap;
    overflow: hidden;
}

.grid th {
    font-weight: normal;
    border-right: 1px solid #859ebf;
    border-bottom: 1px solid #859ebf;
}

.grid thead th {
    background: linear-gradient(#f3f8fe, #dfebf9);
}

.grid thead .corner {
    border: 1px solid #f00;
    background: linear-gradient(135deg, #e0c4cb, #d0bcc8);
}

.grid tbody th {
    background: #eaf3fd;
}

.grid td {
    padding-left: 4px;
    border-right: 1px solid #6fb8f7;
    border-bottom: 1px solid #6fb8f7;
    background: #f8fbff;
}

.grid .num {
    padding-right: 3px;
    text-align: right;
}

.tasks tr:nth-child(even) td {
    background: #eaf4fe;
}

.grid .name {
    padding-left: 0;
}

.mark {
    display: inline-block;
    margin-right: 6px;
    border-left: 4px solid #000;
    border-top: 4px solid transparent;
    border-bottom: 4px solid transparent;
}

/* Процент выполнения */
.grid .pct {
    position: relative;
    padding: 0 1px;
    text-align: center;
}

.bar {
    height: 18px;
    border: 1px solid #999;
    background: linear-gradient(90deg, #9acd32, #5a86c4) 0 0 / 54px 100%;
}

.pct span {
    position: absolute;
    left: 0;
    right: 2px;
    top: 2px;
}

/* Операции */
.grid .step {
    padding: 1px;
}

.chip {
    height: 18px;
    line-height: 18px;
    border: 1px solid #fff;
    border-top-color: #a8a8a8;
    border-left-color: #a8a8a8;
    text-align: center;
}

.chip.done, .chip.active {
    padding-top: 1px;
    border: none;
    box-shadow: 0 0 0 1px #fff;
    background: #9acd32;
}

.chip.active {
    background: #5f9ea0;
}

.tasks tr.sel td {
    background: #6aaae1;
    color: #e4f0fb;
}

.tasks .sel .chip {
    border-color: #e0ecf8;
}

.tasks .sel .chip.done {
    box-shadow: none;
}

.row-split {
    display: flex;
    justify-content: center;
    align-items: center;
    height: 6px;
    flex: none;
}

/* Нижняя таблица */
.grid-bottom .grid-view {
    background: #f9eac4;
}

.details thead th {
    font-size: 13px;
    font-weight: bold;
}

.details tbody th {
    font-weight: bold;
}

.grid .details td {
    border-color: #e3d5ae;
}

.details .odd td {
    background: linear-gradient(#e6d8b4, #f6f2ee);
}

.details .even td {
    background: linear-gradient(#f5efdf, #fbf9f4);
}

.details .sel td {
    background: #808080;
    color: #cfcbc2;
}

.details .sel .focus {
    background: #fff;
    color: #000;
}

/* Строка состояния */
.status {
    display: flex;
    align-items: center;
    height: 29px;
    flex: none;
    border-top: 1px solid #859ebf;
    background: linear-gradient(#dbe7f4, #b4c5da);
    color: #1e395b;
    line-height: 26px;
}

.st-ready {
    width: 168px;
    padding-left: 9px;
}

.st-cell {
    padding: 0 10px 0 11px;
    border-left: 1px solid #9fb3cd;
    box-shadow: inset 1px 0 0 #e8f0f8;
}

.st-date {
    border-right: 1px solid #9fb3cd;
}

.st-work {
    margin-left: auto;
    padding: 0 12px 0 22px;
    border-left: 1px solid #9fb3cd;
    color: #d00000;
}

.st-skin {
    display: flex;
    align-items: center;
    gap: 4px;
    padding: 0 4px 0 7px;
    border-left: 1px solid #9fb3cd;
}

.st-skin select {
    appearance: none;
}
```
